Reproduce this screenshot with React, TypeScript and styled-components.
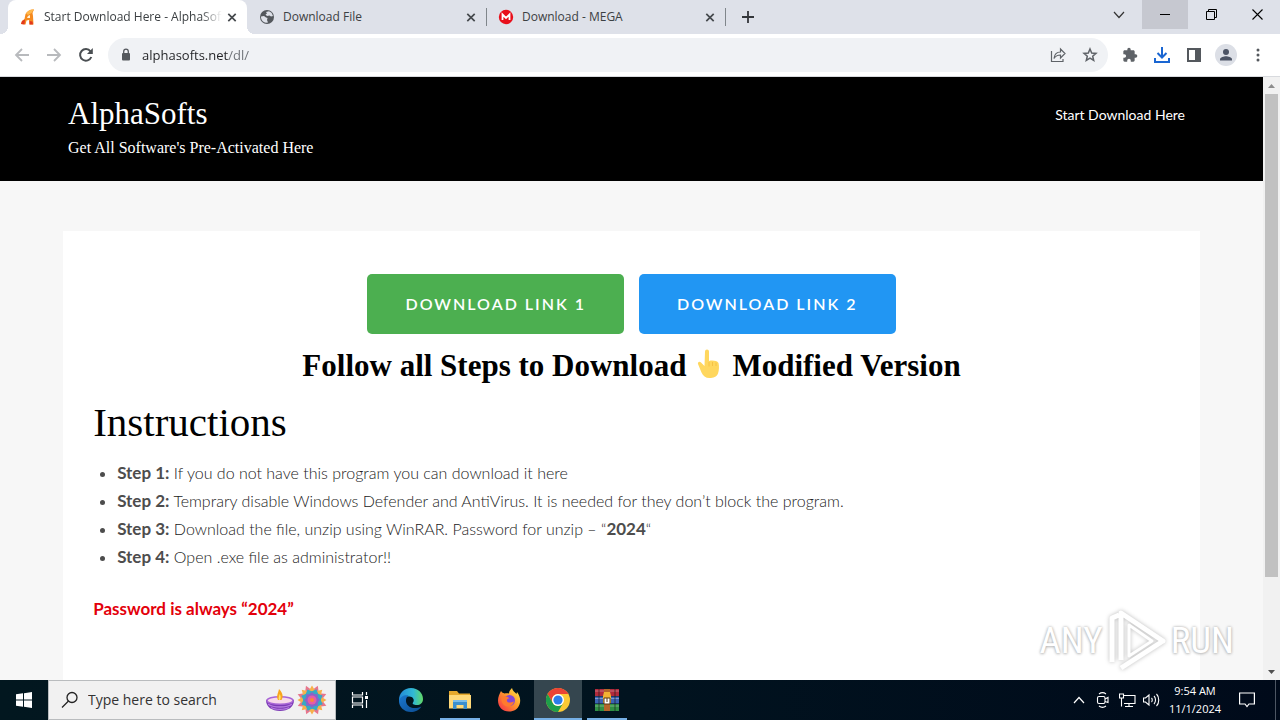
import React from 'react';
import styled, { createGlobalStyle, css } from 'styled-components';

const uiFont = '"Open Sans", "Noto Sans", sans-serif';
const serif = '"Liberation Serif", serif';
const sans = 'Lato, sans-serif';

const GlobalStyle = createGlobalStyle`
  * { box-sizing: border-box; }
  body { margin: 0; background: #f7f7f7; }
  button, input { font: inherit; color: inherit; }
  button { border: 0; padding: 0; background: none; cursor: pointer; }
`;

const Desktop = styled.div`
  display: flex;
  flex-direction: column;
  height: 100vh;
  overflow: hidden;
  font-family: ${uiFont};
`;

/* ---------- browser chrome ---------- */

const TabStrip = styled.header`
  display: flex;
  flex: none;
  height: 34px;
  padding-left: 8px;
  background: #dee1e9;
  color: #3c4043;
`;

const Tab = styled.div<{ $active?: boolean; $divided?: boolean }>`
  position: relative;
  display: flex;
  align-items: center;
  gap: 8px;
  flex: 0 1 239px;
  min-width: 0;
  padding: 0 7px 0 12px;
  font-size: 12px;
  line-height: 16px;
  ${p => p.$active && css`
    background: #fff;
    border-radius: 8px 8px 0 0;
    &::before, &::after {
      content: '';
      position: absolute;
      bottom: 0;
      width: 8px;
      height: 8px;
    }
    &::before { left: -8px; background: radial-gradient(circle at 0 0, #dee1e9 8px, #fff 8px); }
    &::after { right: -8px; background: radial-gradient(circle at 100% 0, #dee1e9 8px, #fff 8px); }
  `}
  ${p => p.$divided && css`
    &::after {
      content: '';
      position: absolute;
      right: -1px;
      top: 8px;
      width: 1px;
      height: 18px;
      background: #80868b;
    }
  `}
`;

const TabTitle = styled.span<{ $faded?: boolean }>`
  flex: 1;
  min-width: 0;
  overflow: hidden;
  white-space: nowrap;
  ${p => p.$faded && css`
    margin-right: -6px;
    mask-image: linear-gradient(90deg, #000 88%, transparent);
  `}
`;

const IconButton = styled.button<{ $w?: number; $h?: number }>`
  display: flex;
  flex: none;
  align-items: center;
  justify-content: center;
  width: ${p => p.$w ?? 32}px;
  height: ${p => p.$h ?? 32}px;
`;

const WindowControls = styled.div`
  display: flex;
  margin-left: auto;
`;

const WindowButton = styled(IconButton)<{ $hover?: boolean }>`
  width: 46px;
  height: 29px;
  color: #000;
  background: ${p => (p.$hover ? '#c6c8d0' : 'transparent')};
`;

const Toolbar = styled.nav`
  display: flex;
  flex: none;
  align-items: center;
  height: 43px;
  padding: 0 6px;
  background: #fff;
  border-bottom: 1px solid #d8dade;
  color: #5f6368;
`;

const AddressBar = styled.div`
  display: flex;
  flex: 1;
  align-items: center;
  height: 34px;
  margin: 0 6px;
  padding: 0 2px 0 10px;
  border-radius: 17px;
  background: #f0f2f5;
`;

const AddressInput = styled.input`
  flex: 1;
  min-width: 0;
  margin-left: 8px;
  padding: 0;
  border: 0;
  outline: 0;
  font-size: 13px;
  line-height: 20px;
  color: transparent;
  background: linear-gradient(90deg, #202124 87px, #6b6f74 87px);
  background-clip: text;
`;

/* ---------- web page ---------- */

const Viewport = styled.div`
  display: flex;
  flex: 1;
  min-height: 0;
`;

const Page = styled.div`
  display: flex;
  flex: 1;
  flex-direction: column;
  min-width: 0;
  overflow: hidden;
  background: #f7f7f7;
`;

const SiteHeader = styled.header`
  display: flex;
  flex: none;
  justify-content: space-between;
  padding: 17px 78px 22px 68px;
  background: #000;
  color: #fff;
`;

const SiteTitle = styled.a`
  display: block;
  font-family: ${serif};
  font-size: 31px;
  line-height: 40px;
  color: inherit;
  text-decoration: none;
`;

const Tagline = styled.p`
  margin: 2px 0 0;
  font-family: ${serif};
  font-size: 16px;
  line-height: 23px;
`;

const NavLink = styled.a`
  margin-top: 9px;
  font-family: ${sans};
  font-size: 14px;
  line-height: 24px;
  color: inherit;
  text-decoration: none;
`;

const Card = styled.main`
  flex: 1;
  width: 90%;
  margin: 50px auto 0;
  padding: 43px 30px;
  background: #fff;
  font-family: ${sans};
  font-size: 16px;
  font-weight: 300;
  line-height: 28px;
  color: #222;
`;

const DownloadRow = styled.div`
  display: flex;
  justify-content: center;
  gap: 15px;
`;

const DownloadButton = styled.button<{ $color: string }>`
  height: 60px;
  padding: 0 38px;
  border-radius: 5px;
  background: ${p => p.$color};
  color: #fff;
  font-size: 16px;
  font-weight: 600;
  letter-spacing: 2px;
`;

const Banner = styled.h2`
  display: flex;
  justify-content: center;
  gap: 10px;
  margin: 12px 0 0;
  font-family: ${serif};
  font-size: 31px;
  line-height: 40px;
  color: #000;
`;

const SectionTitle = styled.h1`
  margin: 11px 0 0;
  font-family: ${serif};
  font-weight: 400;
  font-size: 41px;
  line-height: 50px;
  color: #000;
`;

const Steps = styled.ul`
  margin: 12px 0 24px;
  padding-left: 24px;
  b { font-size: 17px; line-height: 20px; font-weight: 700; color: #4d4d4d; }
  li::marker { color: #4d4d4d; }
`;

const Password = styled.p`
  margin: 0;
  font-size: 17px;
  font-weight: 700;
  color: #e3000b;
`;

const Scrollbar = styled.div`
  display: flex;
  flex: none;
  flex-direction: column;
  width: 17px;
  background: #f1f1f1;
`;

const Thumb = styled.div`
  flex: 484;
  margin: 0 2px;
  background: #c1c1c1;
`;

const Track = styled.div`
  flex: 86;
`;

const Watermark = styled.div`
  position: absolute;
  right: 46px;
  bottom: 46px;
  display: flex;
  align-items: center;
  gap: 4px;
  font-family: "Roboto Condensed", "Open Sans Condensed", "Liberation Sans", sans-serif;
  font-size: 37px;
  line-height: 66px;
  color: #fff;
  text-shadow: 0 0 3px #aaa, 0 1px 3px #ccc;
  pointer-events: none;
  svg { filter: drop-shadow(0 0 2px #bbb); }
`;

/* ---------- taskbar ---------- */

const Taskbar = styled.footer`
  display: flex;
  flex: none;
  height: 40px;
  background: linear-gradient(90deg, #02171f, #01131f 50%, #000a1a);
  color: #fff;
`;

const SearchBox = styled.label`
  display: flex;
  align-items: center;
  width: 288px;
  padding: 0 8px 0 12px;
  border: 1px solid #b9bcbe;
  background: #f1f1f1;
  color: #222;
`;

const SearchInput = styled.input`
  flex: 1;
  min-width: 0;
  margin-left: 9px;
  padding: 0;
  border: 0;
  outline: 0;
  background: none;
  font-size: 14px;
  line-height: 20px;
  &::placeholder { color: #333; opacity: 1; }
`;

const TaskButton = styled.button<{ $running?: boolean; $active?: boolean }>`
  display: flex;
  align-items: center;
  justify-content: center;
  width: 48px;
  background: ${p => (p.$active ? '#35464f' : 'transparent')};
  ${p => (p.$running || p.$active) && css`
    background-image: linear-gradient(#76b0e6, #76b0e6);
    background-repeat: no-repeat;
    background-position: 50% 100%;
    background-size: ${p.$active ? '100%' : '40px'} 2px;
  `}
`;

const PinnedApps = styled.div`
  display: flex;
  gap: 1px;
  margin-left: 3px;
`;

const Tray = styled.div`
  display: flex;
  align-items: center;
  margin-left: auto;
`;

const Clock = styled.time`
  width: 64px;
  font-size: 11px;
  line-height: 18px;
  text-align: center;
  white-space: nowrap;
`;

const ShowDesktop = styled.button`
  align-self: stretch;
  width: 5px;
  margin-left: 8px;
  border-left: 1px solid #4d5663;
`;

/* ---------- drawings ---------- */

const Close = () => (
  <svg width="16" height="16" viewBox="0 0 16 16" stroke="#45494d" strokeWidth="1.7"><path d="M4.3 4.8l7.4 7.4M11.7 4.8l-7.4 7.4" /></svg>
);

const AlphaIcon = () => (
  <svg width="16" height="16" viewBox="0 0 16 16">
    <path d="M5.500 5C7 2 11 0 14 .5L12.500 4l.5 3 .5 8.500H9.500L9 11 6.500 11.500 5.500 15.500 1 15l1-3 2.500-2z" fill="#f58a1f" />
    <path d="M6 4.500C8 1.500 11 0 14 .5L11.500 4 8 6z" fill="#ffb84d" />
    <path d="M1 15l1-3L5 10.500l-.5 5zM9.500 12l3 .500.500 3H9.500z" fill="#e2381c" />
    <path d="M8 7l2-1v3H7z" fill="#fff3dc" />
  </svg>
);

const GlobeIcon = () => (
  <svg width="16" height="16" viewBox="0 0 16 16">
    <circle cx="8" cy="8" r="7" fill="#54585d" />
    <path d="M2 7.500l3-.5 2 1.500 1.500.5L8 11l1 2.500-2 .3C4 13.500 1.800 10.500 2 7.500zM7 3l3-.8 2.500 1.600L14 7l-2 .5-1.500-1L8 7 6.500 5.500l1.500-1z" fill="#dee1e9" />
  </svg>
);

const MegaIcon = () => (
  <svg width="16" height="16" viewBox="0 0 16 16">
    <circle cx="8" cy="8" r="7.200" fill="#e8101c" />
    <path d="M4.500 11V5.500L8 9l3.500-3.500V11" fill="none" stroke="#fff" strokeWidth="1.8" />
  </svg>
);

const Back = ({ flip }: { flip?: boolean }) => (
  <svg width="16" height="16" viewBox="0 0 16 16" fill="none" stroke="#b8babd" strokeWidth="1.8">
    <path d={flip ? 'M1 8h13M8 2l6 6-6 6' : 'M15 8H2M8 2L2 8l6 6'} />
  </svg>
);

const Reload = () => (
  <svg width="16" height="16" viewBox="0 0 16 16" fill="none" stroke="#4a4e52" strokeWidth="2">
    <path d="M13.300 10A5.800 5.800 0 1 1 12.500 4.300" /><path d="M14.800 1v6H9z" fill="#4a4e52" stroke="none" />
  </svg>
);

const Lock = () => (
  <svg width="16" height="16" viewBox="0 0 16 16">
    <rect x="4" y="6" width="8" height="7.500" rx="1" fill="#54585d" />
    <path d="M5.700 6.500V4.500a2.300 2.300 0 0 1 4.600 0v2" fill="none" stroke="#54585d" strokeWidth="1.300" />
  </svg>
);

const Share = () => (
  <svg width="18" height="18" viewBox="0 0 18 18" fill="none" stroke="#5f6368" strokeWidth="1.200">
    <path d="M2.500 5v10.500h11.500V13" /><path d="M5 12.500C5.500 8 8 6 11.500 6V3l4.500 4.500-4.500 4.500V9C8.500 9 6.500 10 5 12.500z" />
  </svg>
);

const Star = () => (
  <svg width="18" height="18" viewBox="0 0 18 18" fill="none" stroke="#5f6368" strokeWidth="1.500">
    <path d="M9 3l1.700 4 4.300.4-3.300 2.800 1 4.300L9 12.200l-3.700 2.300 1-4.300L3 7.400 7.300 7z" />
  </svg>
);

const Puzzle = () => (
  <svg width="16" height="16" viewBox="0 0 24 24" fill="#5f6368">
    <path d="M20.500 11H19V7c0-1.100-.9-2-2-2h-4V3.500a2.500 2.500 0 0 0-5 0V5H4c-1.100 0-2 .9-2 2v3.800h1.500a2.700 2.700 0 0 1 0 5.400H2V20c0 1.100.9 2 2 2h3.800v-1.500a2.700 2.700 0 0 1 5.400 0V22H17c1.100 0 2-.9 2-2v-4h1.500a2.500 2.500 0 0 0 0-5z" />
  </svg>
);

const Download = () => (
  <svg width="18" height="18" viewBox="0 0 18 18" fill="none" stroke="#1a66d2" strokeWidth="2">
    <path d="M9 1v10M4.500 7L9 11.500 13.500 7M2 12v4h14v-4" />
  </svg>
);

const SidePanel = () => (
  <svg width="16" height="16" viewBox="0 0 16 16"><path d="M1 1h14v14H1zM3 3v10h6V3z" fill="#54585d" fillRule="evenodd" /></svg>
);

const Avatar = () => (
  <svg width="22" height="22" viewBox="0 0 22 22">
    <circle cx="11" cy="11" r="11" fill="#dcdfe6" />
    <circle cx="11" cy="8" r="3" fill="#4b5364" />
    <path d="M5 16.500v-1.300c0-2 4-3 6-3s6 1 6 3v1.300z" fill="#4b5364" />
  </svg>
);

const Menu = () => (
  <svg width="16" height="16" viewBox="0 0 16 16" fill="#54585d"><circle cx="8" cy="3" r="1.500" /><circle cx="8" cy="8" r="1.500" /><circle cx="8" cy="13" r="1.500" /></svg>
);

const Hand = () => (
  <svg width="26" height="40" viewBox="-1 -2 26 40" role="img" aria-label="pointing up">
    <path d="M8 3.500a2 2 0 0 1 4 0V13c3-1 8-.5 9.500 2 .8 3 .6 7.500-.5 10.500-1.500 3.500-4.500 4.500-8.500 4.500s-6.500-2-8-5.500L1 16c-.6-2 1.500-3.200 3-1.600L7.500 18z" fill="#ffd75e" />
    <path d="M12 14v4.500M15.500 14v4M19 14.500v3.500" stroke="#f3bd3f" strokeWidth=".8" fill="none" />
  </svg>
);

const Windows = () => (
  <svg width="16" height="16" viewBox="0 0 16 16" fill="#fff">
    <path d="M0 2.300l7-1v6.200H0zM8 1.200L16 0v7.500H8zM0 8.500h7v6.200l-7-1zM8 8.500h8V16l-8-1.200z" />
  </svg>
);

const Magnifier = () => (
  <svg width="18" height="18" viewBox="0 0 18 18" fill="none" stroke="#222" strokeWidth="1.300"><circle cx="11" cy="6.500" r="5" /><path d="M7.500 10L1 16.500" /></svg>
);

const Diya = () => (
  <svg width="30" height="24" viewBox="0 0 30 24">
    <path d="M1 12c2-2.500 26-2.500 28 0 0 7-6 11-14 11S1 19 1 12z" fill="#7c3bb5" />
    <path d="M3 16c5 4 19 4 24 0M6 19.500c4 2.500 14 2.500 18 0" fill="none" stroke="#b57be0" strokeWidth="1.400" />
    <ellipse cx="15" cy="12.500" rx="13" ry="3.800" fill="#f7d9ea" stroke="#a865d6" strokeWidth="1.500" />
    <path d="M14 1c4 4 4.500 8 2.500 11h-3.500C11 8 13 6 14 1z" fill="#f9a51b" />
    <path d="M14.500 6c1.500 2 1.500 4 .5 6h-1c-1-2 .3-4 .5-6z" fill="#ffe36b" />
  </svg>
);

const Rangoli = () => {
  const ring = (n: number, r: number, w: number, fill: string, off: number) =>
    Array.from({ length: n }, (_, i) => (
      <path key={fill + i} d={`M0 ${-r}L${w} ${-r * 0.6}L0 0L${-w} ${-r * 0.6}z`} fill={fill} transform={`rotate(${off + (i * 360) / n})`} />
    ));
  return (
    <svg width="32" height="32" viewBox="-17 -16 32 32">
      {ring(8, 15.500, 3.500, '#e8758c', 22)}
      {ring(8, 14.500, 3.500, '#f7b04a', 0)}
      {ring(8, 11.500, 4.500, '#37a9c4', 22)}
      {ring(8, 8, 3.500, '#8a62c9', 0)}
      <circle r="4.500" fill="#e85aa6" /><circle r="2" fill="#f7873a" />
    </svg>
  );
};

const TaskView = () => (
  <svg width="18" height="18" viewBox="0 0 18 18" fill="none" stroke="#fff" strokeWidth="1.200">
    <path d="M1.500 1v3h10V1M1.500 17v-3h10v3M1.500 6h10v6h-10zM15.500 1v3M15.500 9v8" /><path d="M14 5h3v3h-3z" fill="#fff" stroke="none" />
  </svg>
);

const Edge = () => (
  <svg width="26" height="26" viewBox="0 0 26 26">
    <defs>
      <linearGradient id="edgeTop" x1="0" x2="1"><stop stopColor="#2389d8" /><stop offset=".6" stopColor="#31b9d5" /><stop offset="1" stopColor="#62d966" /></linearGradient>
      <linearGradient id="edgeLow" x1="0" x2="1" y2="1"><stop stopColor="#1b78cf" /><stop offset="1" stopColor="#0b4c91" /></linearGradient>
    </defs>
    <path d="M1 13C1 6 6 1 13 1s12 5 12 11c0 4-3 6-6 6-3.500 0-5-1-4-2.500 2-3-.5-6-3.500-6C6 9.500 2.500 12 1 16z" fill="url(#edgeTop)" />
    <path d="M1 14c1-5 6-6.500 9.500-5.500C7 11 7.500 16 10 18.500c3.500 3.500 9 3 13.300 1C21 23.500 17 25 13 25 6 25 1 20 1 14z" fill="url(#edgeLow)" />
  </svg>
);

const Folder = () => (
  <svg width="24" height="22" viewBox="0 0 24 22">
    <path d="M1 2h8l2 2.500h11V19H1z" fill="#e6a92c" />
    <path d="M1 6h22v13.500H1z" fill="#ffd978" />
    <path d="M5 11h14v9h-3.500v-4h-7v4H5z" fill="#3a8fce" /><path d="M5 11h14v2H5z" fill="#7bbde8" />
  </svg>
);

const Firefox = () => (
  <svg width="24" height="24" viewBox="0 0 24 24">
    <defs><linearGradient id="fox" x1="1" x2="0" y2="1"><stop stopColor="#fff04f" /><stop offset=".45" stopColor="#ff9a2b" /><stop offset="1" stopColor="#f5254c" /></linearGradient></defs>
    <path d="M4 3c1 1.500 2 2 3.500 2.500C9 5 10.500 5 12 5.500 12 3 13.500 1.500 15 0c.5 3 3 4 4.500 6L20 4c3 4 4 8 2.500 12.500C21 21 17 23.500 12 23.500 5.500 23.500 1 19 1 12.500 1 9 2.500 6 4 3z" fill="url(#fox)" />
    <circle cx="12.500" cy="12.500" r="5.500" fill="#8247d8" />
    <path d="M4.500 9c3-1.500 6-.5 8 1.500-2 0-3 1-2.500 2.500.5 2 4 2 7 .5-1 4.500-5 6-8.500 4.500S4 12.500 4.500 9z" fill="#ff7a2e" />
  </svg>
);

const Chrome = () => (
  <svg width="24" height="24" viewBox="0 0 24 24">
    <circle cx="12" cy="12" r="12" fill="#fcc934" />
    <path d="M1.600 6A12 12 0 0 1 22.400 6H12a6 6 0 0 0-5.200 9z" fill="#ea4335" />
    <path d="M1.600 6A12 12 0 0 0 12 24l5.200-9A6 6 0 0 1 6.800 15z" fill="#1e9e4a" />
    <circle cx="12" cy="12" r="6" fill="#fff" /><circle cx="12" cy="12" r="4.600" fill="#2b7de9" />
  </svg>
);

const WinRar = () => (
  <svg width="24" height="22" viewBox="0 0 24 22">
    <path d="M0 0h24v7H0z" fill="#b02a3c" /><path d="M0 7.500h24v7H0z" fill="#3b63b5" /><path d="M0 15h24v7H0z" fill="#2f8f45" />
    <path d="M0 2h24M0 9.500h24M0 17h24" stroke="#fff" strokeOpacity=".35" />
    <path d="M4 0v22M20 0v22" stroke="#1a1a1a" strokeOpacity=".45" strokeWidth="1.500" />
    <path d="M9 0h6v22H9z" fill="#b5652a" /><path d="M9 3h6l1 4v7H8V7z" fill="#f2b233" /><path d="M9 9h6v6H9z" fill="#fff" stroke="#5a3a12" /><path d="M12 9v4" stroke="#5a3a12" />
  </svg>
);

const AnyRunMark = () => (
  <svg width="60" height="66" viewBox="0 0 60 66" fill="none" stroke="#fff" strokeWidth="5" strokeLinejoin="round">
    <path d="M5 54V10l7-3M14 52V5l42 28-42 27" /><path d="M22 17l23 16-23 15z" strokeWidth="3" />
  </svg>
);

const Arrow = ({ down }: { down?: boolean }) => (
  <svg width="9" height="6" viewBox="0 0 9 6" fill={down ? '#505050' : '#8d8d8d'}><path d={down ? 'M1 1h7L4.500 5z' : 'M1 5h7L4.500 1z'} /></svg>
);

/* ---------- data ---------- */

const tabs = [
  { title: 'Start Download Here - AlphaSoft', icon: <AlphaIcon />, active: true },
  { title: 'Download File', icon: <GlobeIcon />, divided: true },
  { title: 'Download - MEGA', icon: <MegaIcon />, divided: true },
];

const steps: React.ReactNode[] = [
  'If you do not have this program you can download it here',
  'Temprary disable Windows Defender and AntiVirus. It is needed for they don’t block the program.',
  <>Download the file, unzip using WinRAR. Password for unzip – “<b>2024</b>“</>,
  'Open .exe file as administrator!!',
];

const apps = [
  { name: 'Microsoft Edge', icon: <Edge /> },
  { name: 'File Explorer', icon: <Folder />, running: true },
  { name: 'Firefox', icon: <Firefox /> },
  { name: 'Google Chrome', icon: <Chrome />, active: true },
  { name: 'WinRAR', icon: <WinRar />, running: true },
];

export default function App() {
  return (
    <Desktop>
      <GlobalStyle />
      <TabStrip>
        {tabs.map(t => (
          <Tab key={t.title} $active={t.active} $divided={t.divided}>
            {t.icon}
            <TabTitle $faded={t.active}>{t.title}</TabTitle>
            <IconButton $w={16} $h={16} aria-label="Close tab"><Close /></IconButton>
          </Tab>
        ))}
        <IconButton $w={46} $h={34} aria-label="New tab">
          <svg width="14" height="14" viewBox="0 0 14 14" stroke="#33363a" strokeWidth="1.800"><path d="M7 1v12M1 7h12" /></svg>
        </IconButton>
        <WindowControls>
          <WindowButton aria-label="Search tabs">
            <svg width="12" height="8" viewBox="0 0 12 8" fill="none" stroke="#333" strokeWidth="1.200"><path d="M1 1l5 5.500L11 1" /></svg>
          </WindowButton>
          <WindowButton $hover aria-label="Minimize">
            <svg width="10" height="1" viewBox="0 0 10 1"><path d="M0 0h10v1H0z" /></svg>
          </WindowButton>
          <WindowButton aria-label="Restore">
            <svg width="11" height="11" viewBox="0 0 11 11" fill="none" stroke="#000"><path d="M.5 2.500h8v8h-8zM2.500 2.500v-2h8v8h-2" /></svg>
          </WindowButton>
          <WindowButton aria-label="Close">
            <svg width="11" height="11" viewBox="0 0 11 11" stroke="#000" strokeWidth="1.100"><path d="M.5.5l10 10M10.500.5l-10 10" /></svg>
          </WindowButton>
        </WindowControls>
      </TabStrip>

      <Toolbar>
        <IconButton aria-label="Back"><Back /></IconButton>
        <IconButton aria-label="Forward"><Back flip /></IconButton>
        <IconButton aria-label="Reload"><Reload /></IconButton>
        <AddressBar>
          <Lock />
          <AddressInput aria-label="Address" defaultValue="alphasofts.net/dl/" />
          <IconButton aria-label="Share"><Share /></IconButton>
          <IconButton aria-label="Bookmark"><Star /></IconButton>
        </AddressBar>
        <IconButton aria-label="Extensions"><Puzzle /></IconButton>
        <IconButton aria-label="Downloads"><Download /></IconButton>
        <IconButton aria-label="Side panel"><SidePanel /></IconButton>
        <IconButton aria-label="Profile"><Avatar /></IconButton>
        <IconButton aria-label="Menu"><Menu /></IconButton>
      </Toolbar>

      <Viewport>
        <Page>
          <SiteHeader>
            <div>
              <SiteTitle href="#">AlphaSofts</SiteTitle>
              <Tagline>Get All Software's Pre-Activated Here</Tagline>
            </div>
            <NavLink href="#">Start Download Here</NavLink>
          </SiteHeader>
          <Card>
            <DownloadRow>
              <DownloadButton $color="#4caf50">DOWNLOAD LINK 1</DownloadButton>
              <DownloadButton $color="#2196f3">DOWNLOAD LINK 2</DownloadButton>
            </DownloadRow>
            <Banner><span>Follow all Steps to Download</span><Hand /><span>Modified Version</span></Banner>
            <SectionTitle>Instructions</SectionTitle>
            <Steps>
              {steps.map((s, i) => <li key={i}><b>Step {i + 1}:</b> {s}</li>)}
            </Steps>
            <Password>Password is always “2024”</Password>
          </Card>
        </Page>
        <Scrollbar>
          <IconButton $w={17} $h={17} aria-label="Scroll up"><Arrow /></IconButton>
          <Thumb />
          <Track />
          <IconButton $w={17} $h={17} aria-label="Scroll down"><Arrow down /></IconButton>
        </Scrollbar>
      </Viewport>

      <Watermark><span>ANY</span><AnyRunMark /><span>RUN</span></Watermark>

      <Taskbar>
        <IconButton $w={48} $h={40} aria-label="Start"><Windows /></IconButton>
        <SearchBox>
          <Magnifier />
          <SearchInput type="text" aria-label="Search" placeholder="Type here to search" />
          <Diya /><Rangoli />
        </SearchBox>
        <TaskButton aria-label="Task View"><TaskView /></TaskButton>
        <PinnedApps>
          {apps.map(a => (
            <TaskButton key={a.name} aria-label={a.name} $running={a.running} $active={a.active}>{a.icon}</TaskButton>
          ))}
        </PinnedApps>
        <Tray>
          <IconButton $w={24} aria-label="Show hidden icons">
            <svg width="12" height="8" viewBox="0 0 12 8" fill="none" stroke="#fff" strokeWidth="1.200"><path d="M1 7l5-5.500L11 7" /></svg>
          </IconButton>
          <IconButton $w={24} aria-label="Meet now">
            <svg width="14" height="16" viewBox="0 0 14 16" fill="none" stroke="#fff" strokeWidth="1.100"><rect x="1.500" y="4.500" width="7.500" height="7" rx="1.500" /><path d="M9 7l3-1.500v5L9 9.500M3 2c2-1.500 5-1.500 7 0M3 14c2 1.500 5 1.500 7 0" /></svg>
          </IconButton>
          <IconButton $w={24} aria-label="Network">
            <svg width="17" height="15" viewBox="0 0 17 15" fill="none" stroke="#fff" strokeWidth="1.100"><path d="M5 2.500h11v8H5M10 10.500v3M6 13.500h8M.5 1h4v4h-4zM2.500 5v8.500" /></svg>
          </IconButton>
          <IconButton $w={24} aria-label="Volume">
            <svg width="17" height="14" viewBox="0 0 17 14" fill="none" stroke="#fff" strokeWidth="1.100"><path d="M.5 5v4h2L6 12V2L2.500 5zM8.500 5c1 1 1 3 0 4M11 3c2 2 2 6 0 8M13.500 1c3 3 3 9 0 12" /></svg>
          </IconButton>
          <Clock>9:54 AM<br />11/1/2024</Clock>
          <IconButton $w={40} aria-label="Notifications">
            <svg width="16" height="16" viewBox="0 0 16 16" fill="none" stroke="#fff" strokeWidth="1.200"><path d="M.600 1h14.800v11H10l-2 2.500L6 12H.600z" /></svg>
          </IconButton>
          <ShowDesktop aria-label="Show desktop" />
        </Tray>
      </Taskbar>
    </Desktop>
  );
}
